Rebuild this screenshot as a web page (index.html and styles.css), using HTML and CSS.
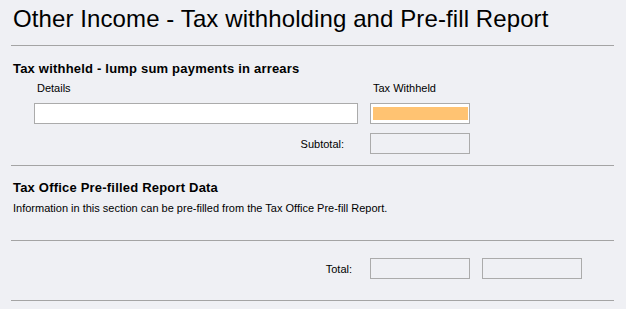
FILE: index.html
```html
<!DOCTYPE html>
<html>
<head>
<meta charset="utf-8">
<link rel="stylesheet" href="styles.css">
</head>
<body>
<div class="page">
  <h1 class="title">Other Income - Tax withholding and Pre-fill Report</h1>

  <section class="section s1">
    <h2 class="heading">Tax withheld - lump sum payments in arrears</h2>
    <div class="grid">
      <div class="label lbl-details">Details</div>
      <div class="label lbl-tax">Tax Withheld</div>
      <div></div>
      <div class="box box-white"></div>
      <div class="box box-white box-focus"><div class="fill"></div></div>
      <div></div>
      <div class="rowlabel sub">Subtotal:</div>
      <div class="box box-sub"></div>
      <div></div>
    </div>
  </section>

  <section class="section s2">
    <h2 class="heading">Tax Office Pre-filled Report Data</h2>
    <p class="desc">Information in this section can be pre-filled from the Tax Office Pre-fill Report.</p>
  </section>

  <section class="section s3">
    <div class="grid">
      <div class="rowlabel tot">Total:</div>
      <div class="box"></div>
      <div class="box"></div>
    </div>
  </section>
</div>
</body>
</html>
```
FILE: styles.css
```css
html, body {
  margin: 0;
  padding: 0;
  background: #eff0f4;
}
body {
  font-family: "Liberation Sans", Arial, sans-serif;
  color: #000;
}
.page {
  padding: 0 12px 0 11px;
}
.title {
  margin: 5px 0 0;
  padding: 0 0 12px 2px;
  font-size: 24px;
  font-weight: normal;
  line-height: 28px;
  height: 28px;
  letter-spacing: 0.1px;
  border-bottom: 1px solid #a4a4a4;
}
.section {
  border-bottom: 1px solid #a4a4a4;
}
.heading {
  margin: 0 0 0 2px;
  font-size: 13px;
  line-height: 15px;
  font-weight: bold;
  letter-spacing: 0.2px;
}
.s1 {
  padding: 15px 0 11px;
}
.s1 .heading {
  margin-bottom: 6px;
}
.grid {
  display: grid;
  grid-template-columns: 324px 100px 100px;
  column-gap: 12px;
  margin-left: 23px;
}
.label {
  font-size: 11px;
  line-height: 13px;
  padding-left: 3px;
  margin-bottom: 8px;
}
.box {
  box-sizing: border-box;
  height: 21px;
  border: 1px solid #ababab;
}
.box-white {
  background: #fff;
}
.box-focus {
  padding: 3px 1px 3px 2px;
}
.fill {
  height: 13px;
  background: #ffc372;
}
.rowlabel {
  font-size: 11px;
  display: flex;
  align-items: center;
  justify-content: flex-end;
}
.sub {
  margin-top: 9px;
  padding-right: 14px;
}
.box-sub {
  margin-top: 9px;
}
.tot {
  padding-right: 6px;
}
.s2 {
  padding: 14px 0 25px;
}
.desc {
  margin: 7px 0 0 2px;
  font-size: 11px;
  line-height: 13px;
}
.s3 {
  padding: 17px 0 21px;
}
```
